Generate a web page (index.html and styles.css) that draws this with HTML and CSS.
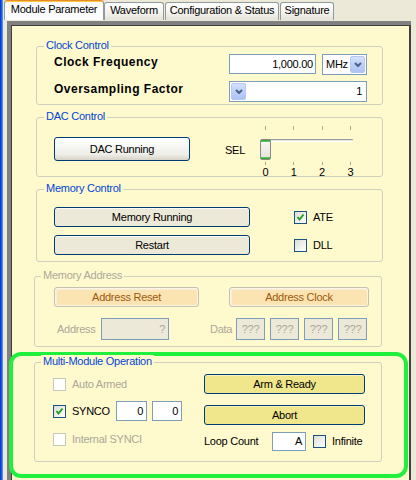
FILE: index.html
```html
<!DOCTYPE html>
<html lang="en">
<head>
<meta charset="utf-8">
<title>Module Parameter</title>
<link rel="stylesheet" href="styles.css">
</head>
<body>
<div class="window">
  <div class="window-edge"></div>
  <div class="tabctl">
    <div class="tabs">
      <div class="tab tab-active">Module Parameter</div>
      <div class="tab tab-wave">Waveform</div>
      <div class="tab tab-conf">Configuration &amp; Status</div>
      <div class="tab tab-sig">Signature</div>
    </div>
    <div class="frame">
      <div class="page">

        <div class="group g-clock">
          <div class="legend">Clock Control</div>
          <div class="clock-grid">
            <div class="biglabel">Clock Frequency</div>
            <div class="clock-ctrls">
              <div class="textbox tb-freq">1,000.00</div>
              <div class="combo cb-unit">
                <span class="combo-text">MHz</span>
                <span class="dropbtn"><svg viewBox="0 0 8 5" width="8" height="5"><path d="M1 1 L4 4 L7 1"/></svg></span>
              </div>
            </div>
            <div class="biglabel">Oversampling Factor</div>
            <div class="combo cb-over">
              <span class="dropbtn"><svg viewBox="0 0 8 5" width="8" height="5"><path d="M1 1 L4 4 L7 1"/></svg></span>
              <span class="combo-value">1</span>
            </div>
          </div>
        </div>

        <div class="group g-dac">
          <div class="legend">DAC Control</div>
          <div class="dac-row">
            <div class="btn btn-default btn-dac">DAC Running</div>
            <div class="sel-label">SEL</div>
            <div class="slider">
              <div class="ticks ticks-top"><i></i><i></i><i></i><i></i></div>
              <div class="track-area">
                <div class="track"></div>
                <div class="thumb"></div>
              </div>
              <div class="ticks ticks-bottom"><i></i><i></i><i></i><i></i></div>
              <div class="ticks scale"><span>0</span><span>1</span><span>2</span><span>3</span></div>
            </div>
          </div>
        </div>

        <div class="group g-mem">
          <div class="legend">Memory Control</div>
          <div class="mem-grid">
            <div class="btn btn-face">Memory Running</div>
            <div class="checkrow">
              <span class="check"><svg viewBox="0 0 11 11" width="11" height="11"><path d="M2.5 5 L4.5 7.5 L8.5 2.5"/></svg></span>
              <span>ATE</span>
            </div>
            <div class="btn btn-face">Restart</div>
            <div class="checkrow">
              <span class="check"></span>
              <span>DLL</span>
            </div>
          </div>
        </div>

        <div class="group g-addr">
          <div class="legend legend-off">Memory Address</div>
          <div class="addr-buttons">
            <div class="btn btn-peach btn-areset">Address Reset</div>
            <div class="btn btn-peach btn-aclock">Address Clock</div>
          </div>
          <div class="addr-row">
            <span class="off-text lbl-address">Address</span>
            <div class="textbox tb-off tb-address">?</div>
            <span class="off-text lbl-data">Data</span>
            <div class="data-boxes">
              <div class="textbox tb-off tb-data">???</div>
              <div class="textbox tb-off tb-data">???</div>
              <div class="textbox tb-off tb-data">???</div>
              <div class="textbox tb-off tb-data">???</div>
            </div>
          </div>
        </div>

        <div class="highlight">
          <div class="group g-multi">
            <div class="legend legend-multi">Multi-Module Operation</div>
            <div class="multi-body">
              <div class="multi-left">
                <div class="mrow">
                  <span class="check check-off"></span>
                  <span class="off-text">Auto Armed</span>
                </div>
                <div class="mrow mrow-sync">
                  <span class="check"><svg viewBox="0 0 11 11" width="11" height="11"><path d="M2.5 5 L4.5 7.5 L8.5 2.5"/></svg></span>
                  <span class="sync-label">SYNCO</span>
                  <div class="textbox tb-sync1">0</div>
                  <div class="textbox tb-sync2">0</div>
                </div>
                <div class="mrow mrow-int">
                  <span class="check check-off"></span>
                  <span class="off-text">Internal SYNCI</span>
                </div>
              </div>
              <div class="multi-right">
                <div class="btn btn-khaki">Arm &amp; Ready</div>
                <div class="btn btn-khaki btn-abort">Abort</div>
                <div class="loop-row">
                  <span class="loop-label">Loop Count</span>
                  <div class="textbox tb-loop">A</div>
                  <span class="check check-inf"></span>
                  <span>Infinite</span>
                </div>
              </div>
            </div>
          </div>
        </div>

      </div>
    </div>
  </div>
</div>
</body>
</html>
```
FILE: styles.css
```css
* { box-sizing: border-box; }

html, body { margin: 0; padding: 0; }

body {
  width: 416px;
  height: 480px;
  overflow: hidden;
  background: #ECE9D8;
  font-family: "Liberation Sans", Arial, sans-serif;
  font-size: 11px;
  line-height: 13px;
  letter-spacing: -0.25px;
  color: #000;
}

/* window shell: blue frame edge + tab control */
.window { display: flex; height: 480px; }
.window-edge {
  width: 3px;
  flex: none;
  background: linear-gradient(to right, #0A3CD2 0, #0A3CD2 1px, #1C5DE9 1px, #1C5DE9 2px, #4B88F2 2px);
}
.tabctl { flex: 1; min-width: 0; }

/* tab strip */
.tabs {
  display: flex;
  align-items: flex-end;
  height: 21px;
  padding: 0 0 1px 1px;
}
.tab {
  height: 18px;
  border: 1px solid #919B9C;
  border-bottom: none;
  border-radius: 3px 3px 0 0;
  background: linear-gradient(#FFFFFF, #F4F3EE 55%, #E4E2D9);
  text-align: center;
  padding-top: 1px;
  white-space: nowrap;
}
.tab-active {
  width: 100px;
  height: 20px;
  background: #FCFCFE;
  border-top: 1px solid #E68B2C;
  box-shadow: inset 0 1px 0 #FFC83C;
  padding-top: 2px;
}
.tab-wave { width: 60px; }
.tab-conf { width: 114px; margin-left: 1px; }
.tab-sig { width: 54px; margin-left: 1px; }

/* sunken page frame */
.frame {
  margin-left: 4px;
  width: 404px;
  height: 459px;
  border-top: 4px solid #808080;
  border-left: 4px solid #808080;
}
.page {
  height: 100%;
  background: #FFF9CE;
  border-top: 1px solid #404040;
  border-left: 1px solid #404040;
  border-right: 2px solid #404040;
  padding: 0 24px;
}

/* group boxes */
.group {
  border: 1px solid #D0D0BF;
  border-radius: 3px;
}
.legend {
  display: table;
  height: 13px;
  margin: -8px 0 0 7px;
  padding: 0 2px;
  background: #FFF9CE;
  color: #0046D5;
  white-space: nowrap;
}
.legend-off { color: #ACA899; margin-left: 6px; }
.legend-multi { margin-left: 6px; }

.g-clock { width: 347px; height: 59px; margin-top: 20px; }
.g-dac { width: 347px; height: 60px; margin-top: 12px; }
.g-mem { width: 347px; height: 73px; margin-top: 12px; }
.g-addr { width: 348px; height: 71px; margin: 14px 0 0 -2px; }
.g-multi { width: 348px; height: 100px; }

/* common controls */
.btn {
  display: flex;
  align-items: center;
  justify-content: center;
  border: 1px solid #003C74;
  border-radius: 3px;
  white-space: nowrap;
}
.btn-default {
  background: linear-gradient(#FFFFFF 0%, #F7F7F4 35%, #EEEDE7 75%, #D8D3C8 100%);
}
.btn-face {
  background: #ECE9D8;
  box-shadow: inset 0 1px 0 #FAF9F4;
}
.btn-khaki {
  background: #F0E68C;
  box-shadow: inset 0 1px 0 #F8F1BE;
}
.btn-peach {
  border: 1px solid #C4C1B1;
  background: #FCE3B2;
  box-shadow: inset 0 0 0 1px #FBF5E2, inset 1px 1px 0 1px #F7EEDA;
  color: #9A5A0C;
}

.textbox {
  display: flex;
  align-items: center;
  justify-content: flex-end;
  border: 1px solid #7F9DB9;
  background: #FFFFFF;
  padding-right: 3px;
  white-space: nowrap;
}
.tb-off { background: #ECE9D8; color: #ACA899; }

.combo {
  display: flex;
  align-items: center;
  border: 1px solid #7F9DB9;
  background: #FFFFFF;
  padding: 1px;
}
.dropbtn {
  width: 15px;
  height: 17px;
  flex: none;
  display: flex;
  align-items: center;
  justify-content: center;
  border: 1px solid #B5C8F2;
  border-radius: 2px;
  background: linear-gradient(#D6E1FC, #BDD0F8 50%, #AFC4F4);
}
.dropbtn svg { display: block; }
.dropbtn path { fill: none; stroke: #4D6185; stroke-width: 2; }

.check {
  width: 13px;
  height: 13px;
  flex: none;
  display: flex;
  align-items: center;
  justify-content: center;
  border: 1px solid #1C5180;
  background: linear-gradient(135deg, #DCDCD7 0%, #F2F2EE 60%, #FFFFFF 100%);
}
.check svg { display: block; }
.check path { fill: none; stroke: #21A121; stroke-width: 2; }
.check-off { border-color: #CAC8BB; background: #FFFFFF; }

.off-text { color: #ACA899; }

/* clock control */
.clock-grid {
  display: grid;
  grid-template-columns: 1fr 138px;
  grid-auto-rows: 21px;
  row-gap: 6px;
  margin-top: 2px;
  padding: 0 15px 0 17px;
}
.biglabel {
  font-size: 12px;
  font-weight: bold;
  line-height: 14px;
  letter-spacing: 0.5px;
  margin-top: 1px;
  white-space: nowrap;
}
.clock-ctrls { display: flex; align-items: flex-start; gap: 6px; }
.tb-freq { width: 87px; height: 20px; padding-right: 2px; }
.cb-unit { width: 45px; height: 21px; }
.combo-text { flex: 1; padding-left: 2px; }
.cb-over { width: 138px; height: 21px; }
.combo-value { flex: 1; text-align: right; padding-right: 3px; }

/* DAC control */
.dac-row {
  display: flex;
  align-items: flex-start;
  padding-left: 17px;
}
.btn-dac { width: 136px; height: 24px; margin-top: 14px; }
.sel-label { width: 33px; margin: 21px 0 0 35px; }
.slider { width: 100px; margin-top: 3px; }
.ticks {
  display: flex;
  justify-content: space-between;
  padding: 0 2px;
}
.ticks i {
  display: block;
  width: 11px;
  background: linear-gradient(to right, transparent 5px, #A5A5A0 5px, #A5A5A0 6px, transparent 6px);
}
.ticks-top i { height: 4px; }
.ticks-bottom { margin-top: 1px; }
.ticks-bottom i { height: 3px; }
.scale { margin-top: 1px; }
.scale span { display: block; width: 11px; text-align: center; letter-spacing: 0; }
.track-area { position: relative; height: 22px; margin-top: 1px; }
.track {
  margin: 9px 5px 0 4px;
  height: 3px;
  border-radius: 1px;
  background: linear-gradient(#9D9D99 0, #9D9D99 1px, #E4E4DE 1px, #E4E4DE 2px, #FFFFFF 2px);
}
.thumb {
  position: absolute;
  left: 2px;
  top: 0;
  width: 11px;
  height: 21px;
  border: 1px solid #8A8A86;
  border-radius: 2px;
  background: linear-gradient(#21A121 0, #6FD06F 2px, #F6F6F2 2px, #E6E5DE 17px, #6FD06F 17px, #21A121 19px);
}

/* memory control */
.mem-grid {
  display: grid;
  grid-template-columns: 196px auto;
  grid-auto-rows: 20px;
  column-gap: 44px;
  row-gap: 8px;
  margin-top: 12px;
  padding-left: 17px;
}
.checkrow { display: flex; align-items: center; gap: 6px; }

/* memory address */
.addr-buttons {
  display: flex;
  gap: 30px;
  margin-top: 5px;
  padding-left: 19px;
}
.btn-areset { width: 145px; height: 20px; }
.btn-aclock { width: 140px; height: 20px; }
.addr-row {
  display: flex;
  align-items: center;
  margin-top: 11px;
  padding-left: 22px;
}
.lbl-address { width: 44px; }
.tb-address { width: 68px; height: 22px; }
.lbl-data { width: 26px; margin-left: 41px; }
.data-boxes { display: flex; gap: 5px; }
.tb-data { width: 29px; height: 22px; justify-content: center; padding: 0; }

/* highlighted multi-module section */
.highlight {
  width: 399px;
  height: 126px;
  margin: 5px 0 0 -27px;
  border: 4px solid #1EF03C;
  border-radius: 12px;
  padding: 6px 0 0 21px;
}
.multi-body {
  display: flex;
  margin-top: 6px;
  padding-left: 18px;
}
.multi-left { width: 151px; }
.mrow { display: flex; align-items: center; gap: 6px; height: 20px; }
.mrow-sync { margin-top: 7px; gap: 0; }
.mrow-sync .sync-label { width: 44px; margin-left: 6px; }
.mrow-int { margin-top: 8px; }
.tb-sync1 { width: 31px; height: 20px; }
.tb-sync2 { width: 30px; height: 20px; margin-left: 5px; }
.multi-right { width: 161px; }
.multi-right .btn { height: 20px; }
.btn-abort { margin-top: 11px; }
.loop-row { display: flex; align-items: center; height: 19px; margin-top: 7px; }
.loop-label { width: 68px; }
.tb-loop { width: 34px; height: 19px; }
.check-inf { margin: 0 6px 0 7px; }
```
